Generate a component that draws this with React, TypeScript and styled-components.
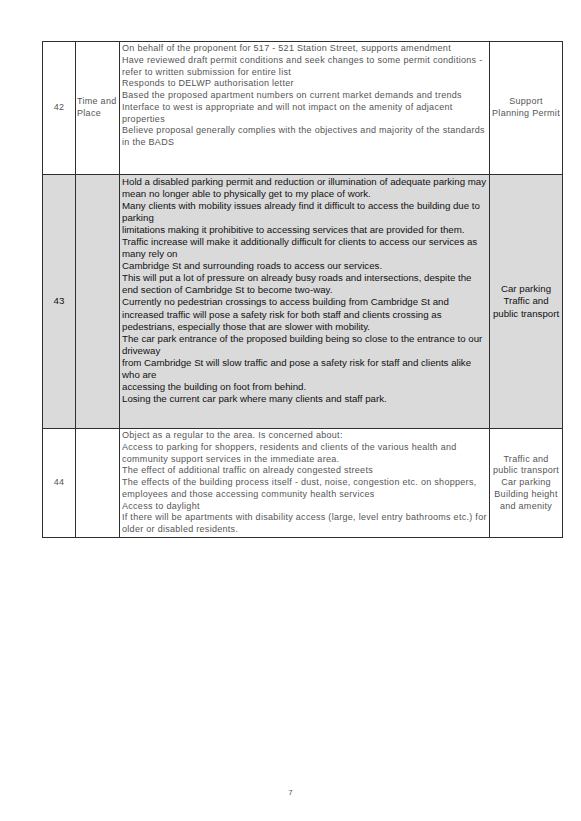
import React from "react";
import styled, { createGlobalStyle } from "styled-components";

const GlobalStyle = createGlobalStyle`
  html, body {
    margin: 0;
    padding: 0;
    background: #ffffff;
  }
  body {
    font-family: "Liberation Sans", Arial, sans-serif;
  }
`;

const Page = styled.div`
  width: 581px;
  height: 821px;
  box-sizing: border-box;
  padding-top: 41px;
  display: flex;
  flex-direction: column;
`;

const Table = styled.table`
  width: 520px;
  margin-left: 42px;
  border-collapse: collapse;
  table-layout: fixed;
  border: 1px solid #333;
`;

const Row = styled.tr<{ $shaded?: boolean; $h: number }>`
  height: ${(p) => p.$h}px;
  background: ${(p) => (p.$shaded ? "#dadada" : "#ffffff")};
  color: ${(p) => (p.$shaded ? "#111111" : "#555555")};
  letter-spacing: ${(p) => (p.$shaded ? "0" : "0.29px")};
  font-size: ${(p) => (p.$shaded ? "9.7px" : "9px")};
  line-height: ${(p) => (p.$shaded ? "12.05px" : "11.75px")};
`;

const Cell = styled.td<{ $align?: "left" | "center"; $top?: boolean }>`
  border: 1px solid #2f2f2f;
  padding: ${(p) => (p.$top ? "1px 2px 0 2px" : "0 1px")};
  vertical-align: ${(p) => (p.$top ? "top" : "middle")};
  text-align: ${(p) => p.$align || "left"};
  overflow: hidden;
`;

const Line = styled.div`
  white-space: nowrap;
`;

const Footer = styled.div`
  margin-top: 250px;
  width: 581px;
  text-align: center;
  font-size: 8px;
  color: #555;
`;

type Entry = {
  no: string;
  who: string[];
  text: string[];
  topic: string[];
  shaded?: boolean;
  h: number;
};

const entries: Entry[] = [
  {
    no: "42",
    who: ["Time and", "Place"],
    h: 133,
    text: [
      "On behalf of the proponent for 517 - 521 Station Street, supports amendment",
      "Have reviewed draft permit conditions and seek changes to some permit conditions -",
      "refer to written submission for entire list",
      "Responds to DELWP authorisation letter",
      "Based the proposed apartment numbers on current market demands and trends",
      "Interface to west is appropriate and will not impact on the amenity of adjacent",
      "properties",
      "Believe proposal generally complies with the objectives and majority of the standards",
      "in the BADS",
    ],
    topic: ["Support", "Planning Permit"],
  },
  {
    no: "43",
    who: [],
    shaded: true,
    h: 254,
    text: [
      "Hold a disabled parking permit and reduction or illumination of adequate parking may",
      "mean no longer able to physically get to my place of work.",
      "Many clients with mobility issues already find it difficult to access the building due to",
      "parking",
      "limitations making it prohibitive to accessing services that are provided for them.",
      "Traffic increase will make it additionally difficult for clients to access our services as",
      "many rely on",
      "Cambridge St and surrounding roads to access our services.",
      "This will put a lot of pressure on already busy roads and intersections, despite the",
      "end section of Cambridge St to become two-way.",
      "Currently no pedestrian crossings to access building from Cambridge St and",
      "increased traffic will pose a safety risk for both staff and clients crossing as",
      "pedestrians, especially those that are slower with mobility.",
      "The car park entrance of the proposed building being so close to the entrance to our",
      "driveway",
      "from Cambridge St will slow traffic and pose a safety risk for staff and clients alike",
      "who are",
      "accessing the building on foot from behind.",
      "Losing the current car park where many clients and staff park.",
    ],
    topic: ["Car parking", "Traffic and", "public transport"],
  },
  {
    no: "44",
    who: [],
    h: 109,
    text: [
      "Object as a regular to the area. Is concerned about:",
      "Access to parking for shoppers, residents and clients of the various health and",
      "community support services in the immediate area.",
      "The effect of additional traffic on already congested streets",
      "The effects of the building process itself - dust, noise, congestion etc. on shoppers,",
      "employees and those accessing community health services",
      "Access to daylight",
      "If there will be apartments with disability access (large, level entry bathrooms etc.) for",
      "older or disabled residents.",
    ],
    topic: ["Traffic and", "public transport", "Car parking", "Building height", "and amenity"],
  },
];

const App = () => {
  return (
    <Page>
      <GlobalStyle />
      <Table>
        <colgroup>
          <col style={{ width: 33 }} />
          <col style={{ width: 44 }} />
          <col style={{ width: 370 }} />
          <col style={{ width: 73 }} />
        </colgroup>
        <tbody>
          {entries.map((e) => (
            <Row key={e.no} $shaded={e.shaded} $h={e.h}>
              <Cell $align="center">{e.no}</Cell>
              <Cell>
                {e.who.map((w) => (
                  <Line key={w}>{w}</Line>
                ))}
              </Cell>
              <Cell $top>
                {e.text.map((t, i) => (
                  <Line key={i}>{t}</Line>
                ))}
              </Cell>
              <Cell $align="center">
                {e.topic.map((t) => (
                  <Line key={t}>{t}</Line>
                ))}
              </Cell>
            </Row>
          ))}
        </tbody>
      </Table>
      <Footer>7</Footer>
    </Page>
  );
};

export default App;
